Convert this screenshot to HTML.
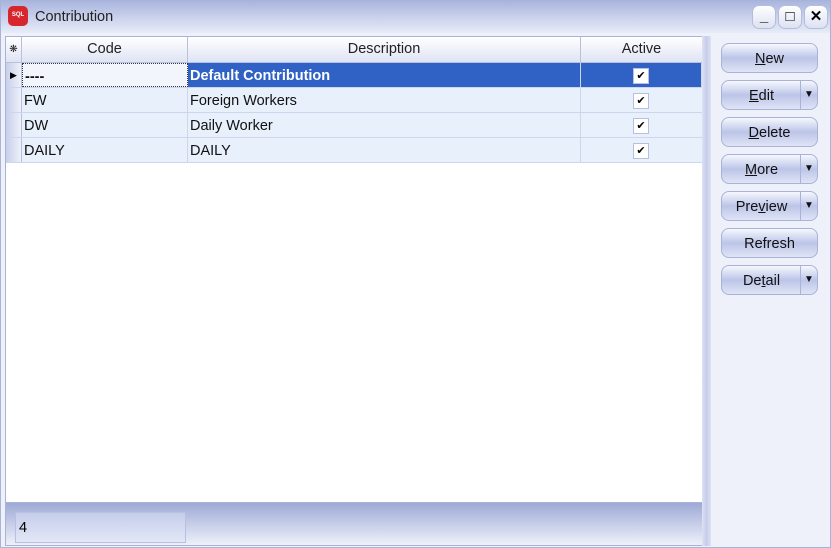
<html><head><style>
body{margin:0;width:831px;height:548px;overflow:hidden;font-family:"Liberation Sans",sans-serif;font-size:14.5px;background:#eef1fa;position:relative}
.a{position:absolute}
.win{left:0;top:0;width:829px;height:546px;border:1px solid #a9b3d8;background:#eef1fa}
.title{left:1px;top:1px;width:829px;height:32px;background:linear-gradient(#a9b5de,#e8ecf8)}
.tb{width:22px;height:22px;border:1px solid #b5bddc;border-radius:7px;background:linear-gradient(#fff,#dde2f2);top:5px;text-align:center;font-weight:bold;line-height:22px;font-size:15px}
.grid{left:5px;top:36px;width:696px;height:466px;background:#fff;border:1px solid #a9b3d8}
.hd{top:0;height:25px;background:linear-gradient(#fff,#dfe4f4);border-right:1px solid #b8c0df;border-bottom:1px solid #b8c0df;text-align:center;line-height:25px;color:#222}
.row{left:0;width:696px;height:24px;background:#e8f0fc;border-bottom:1px solid #cdd6ec}
.c{top:0;height:24px;line-height:27px;padding-left:2px;border-right:1px solid #cdd6ec;box-sizing:border-box;color:#111}
.ind{left:0;width:15px;height:24px;background:linear-gradient(90deg,#c8cfea,#eef1fa);border-right:1px solid #b8c0df}
.cb{width:14px;height:14px;border:1px solid #b8c0df;background:#fff;left:627px;top:5px;font-size:11px;line-height:14px;text-align:center}
.btn{left:721px;width:95px;height:28px;border:1px solid #a9b3d8;border-radius:8px;background:linear-gradient(#f6f8fe,#bcc5e8 50%,#dfe4f5);text-align:center;line-height:30px;color:#111}
.dd{position:absolute;right:0;top:0;width:16px;height:28px;border-left:1px solid #a9b3d8;font-size:10px;line-height:28px}
.btn.s{text-indent:-16px}
</style></head><body>
<div class="a win"></div>
<div class="a title"></div>
<div class="a" style="left:8px;top:6px;width:20px;height:20px;border-radius:5px;background:#d7262e;color:#fff;font-size:6px;text-align:center;line-height:18px;font-weight:bold">SQL</div>
<div class="a" style="left:35px;top:9px;font-size:14.5px;color:#222">Contribution</div>
<div class="a tb" style="left:752px">_</div>
<div class="a tb" style="left:778px">□</div>
<div class="a tb" style="left:804px">✕</div>
<div class="a grid">
<div class="a hd" style="left:0;width:15px;font-size:10px">❋</div>
<div class="a hd" style="left:16px;width:165px">Code</div>
<div class="a hd" style="left:182px;width:392px">Description</div>
<div class="a hd" style="left:575px;width:121px;border-right:0">Active</div>
<div class="a row" style="top:26px;background:#f2f5fb"><div class="a ind" style="font-size:9px;line-height:24px;text-align:center">▶</div>
<div class="a c" style="left:16px;width:166px;font-weight:bold;border:1px dotted #333">----</div>
<div class="a c" style="left:182px;width:393px;background:#2f62c4;color:#fff;font-weight:bold">Default Contribution</div>
<div class="a c" style="left:575px;width:121px;background:#2f62c4"></div><div class="a cb">✔</div></div>
<div class="a row" style="top:51px"><div class="a ind"></div><div class="a c" style="left:16px;width:166px">FW</div><div class="a c" style="left:182px;width:393px">Foreign Workers</div><div class="a cb">✔</div></div>
<div class="a row" style="top:76px"><div class="a ind"></div><div class="a c" style="left:16px;width:166px">DW</div><div class="a c" style="left:182px;width:393px">Daily Worker</div><div class="a cb">✔</div></div>
<div class="a row" style="top:101px"><div class="a ind"></div><div class="a c" style="left:16px;width:166px">DAILY</div><div class="a c" style="left:182px;width:393px">DAILY</div><div class="a cb">✔</div></div>
</div>
<div class="a" style="left:5px;top:502px;width:696px;height:42px;border:1px solid #a9b3d8;background:linear-gradient(#9eaad6,#eef1fa)"></div>
<div class="a" style="left:15px;top:512px;width:169px;height:29px;border:1px solid #b8c0df;background:linear-gradient(#c5cdea,#e3e7f6);line-height:30px;text-indent:3px">4</div>
<div class="a" style="left:702px;top:36px;width:9px;height:510px;background:linear-gradient(90deg,#dde2f3,#c6cde8,#dde2f3)"></div>
<div class="a btn" style="top:43px"><u>N</u>ew</div>
<div class="a btn s" style="top:80px"><u>E</u>dit<span class="dd" style="text-indent:0">▼</span></div>
<div class="a btn" style="top:117px"><u>D</u>elete</div>
<div class="a btn s" style="top:154px"><u>M</u>ore<span class="dd" style="text-indent:0">▼</span></div>
<div class="a btn s" style="top:191px">Pre<u>v</u>iew<span class="dd" style="text-indent:0">▼</span></div>
<div class="a btn" style="top:228px">Refresh</div>
<div class="a btn s" style="top:265px">De<u>t</u>ail<span class="dd" style="text-indent:0">▼</span></div>
</body></html>
